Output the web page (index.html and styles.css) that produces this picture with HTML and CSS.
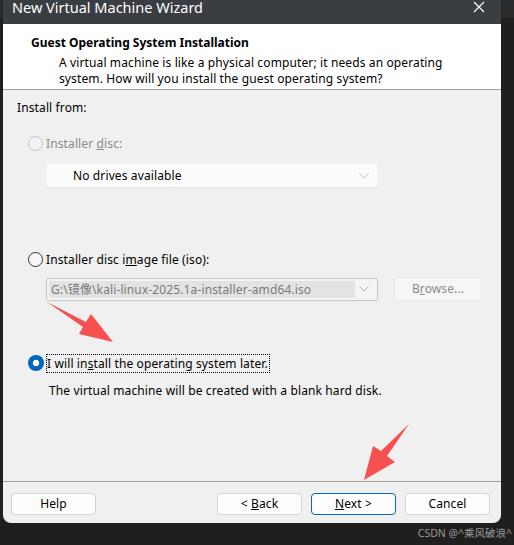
FILE: index.html
```html
<!DOCTYPE html>
<html>
<head>
<meta charset="utf-8">
<link rel="stylesheet" href="styles.css">
</head>
<body>
<div class="screen">
  <div class="dialog">
    <div class="titlebar">
      <span class="title">New Virtual Machine Wizard</span>
      <svg class="close" width="12" height="12" viewBox="0 0 12 12"><path d="M1 1L11 11M11 1L1 11" stroke="#fff" stroke-width="1.2"/></svg>
    </div>
    <div class="header">
      <div class="h-title">Guest Operating System Installation</div>
      <div class="h-desc">A virtual machine is like a physical computer; it needs an operating system. How will you install the guest operating system?</div>
    </div>
    <div class="content">
      <div class="row label">Install from:</div>
      <div class="row radio-row disabled r1">
        <span class="radio"></span>
        <span>Installer <u>d</u>isc:</span>
      </div>
      <div class="combo flat">
        <span class="combo-text">No drives available</span>
        <svg class="chev" width="10" height="6" viewBox="0 0 10 6"><path d="M0.5 0.5L5 5L9.5 0.5" fill="none" stroke="#c4c4c4"/></svg>
      </div>
      <div class="row radio-row r2">
        <span class="radio"></span>
        <span>Installer disc i<u>m</u>age file (iso):</span>
      </div>
      <div class="iso-row">
        <div class="combo boxed">
          <span class="combo-sel">G:\镜像\kali-linux-2025.1a-installer-amd64.iso</span>
          <svg class="chev" width="10" height="6" viewBox="0 0 10 6"><path d="M0.5 0.5L5 5L9.5 0.5" fill="none" stroke="#b0b0b0"/></svg>
        </div>
        <div class="btn browse"><span>B<u>r</u>owse...</span></div>
      </div>
      <div class="row radio-row r3">
        <span class="radio checked"></span>
        <span class="focus">I will in<u>s</u>tall the operating system later.</span>
      </div>
      <div class="row note">The virtual machine will be created with a blank hard disk.</div>
    </div>
    <div class="footer">
      <div class="btn"><span>Help</span></div>
      <div class="btn push"><span>&lt; <u>B</u>ack</span></div>
      <div class="btn primary"><span><u>N</u>ext &gt;</span></div>
      <div class="btn last"><span>Cancel</span></div>
    </div>
  </div>
  <div class="watermark">CSDN @^乘风破浪^</div>
  <svg class="arrow" width="514" height="545" viewBox="0 0 514 545">
    <polygon points="47,302 86,322 91,314 113,342 79,334 83,327" fill="#f85050"/>
    <polygon points="409,424 387,456 395,462 364,480 373,446 381,451" fill="#f85050"/>
  </svg>
</div>
</body>
</html>
```

FILE: styles.css
```css
* { box-sizing: border-box; }
html, body { margin: 0; padding: 0; }
body {
  background: #1e1e1e;
  font-family: "Noto Sans", "Noto Sans CJK SC", sans-serif;
  font-size: 12px;
  letter-spacing: 0.12px;
  color: #000;
}
.screen {
  position: relative;
  width: 514px;
  height: 545px;
  overflow: hidden;
  background: linear-gradient(#2b2b2b 0 18px, #1f1f1f 18px);
}
.dialog {
  margin-left: 3px;
  width: 498px;
  background: #f0f0f0;
  border-radius: 0 0 8px 8px;
  overflow: hidden;
}
.titlebar {
  height: 24px;
  background: #3a3d41;
  display: flex;
  align-items: flex-start;
  justify-content: space-between;
  padding: 0 16px 0 9px;
}
.title {
  color: #fff;
  font-size: 14.5px;
  letter-spacing: 0;
  line-height: 14px;
  padding-top: 0;
}
.close { margin-top: 1px; }
.header {
  height: 66px;
  background: #fff;
  border-bottom: 1px solid #a0a0a0;
  padding: 11px 0 0 28px;
}
.h-title {
  font-weight: bold;
  font-size: 12px;
  letter-spacing: 0;
  line-height: 16px;
}
.h-desc {
  padding: 4px 40px 0 28px;
  line-height: 16px;
}
.content {
  height: 391px;
  padding: 8px 0 0 14px;
  display: flex;
  flex-direction: column;
  align-items: flex-start;
}
.row {
  height: 18px;
  display: flex;
  align-items: center;
  flex: none;
}
.radio-row {
  gap: 3px;
  margin-left: 11px;
}
.r1 { margin-top: 18px; }
.r2 { margin-top: 62px; }
.r3 { margin-top: 53px; }
.radio {
  width: 15px;
  height: 15px;
  border-radius: 50%;
  border: 1px solid #333;
  background: #f6f6f6;
  flex: none;
}
.disabled { color: #8a8a8a; }
.disabled .radio { border-color: #c6c6c6; background: #f3f3f3; }
.radio.checked {
  width: 16px;
  height: 16px;
  border: none;
  background: radial-gradient(circle, #fff 0 3px, #0067c0 3.6px);
}
.combo {
  position: relative;
  display: flex;
  align-items: center;
  width: 332px;
  margin-left: 29px;
  flex: none;
}
.combo.flat {
  height: 25px;
  margin-top: 11px;
  background: #fbfbfb;
  border: 1px solid #f2f2f2;
  border-bottom-color: #e6e6e6;
}
.combo-text { padding-left: 26px; }
.chev { position: absolute; right: 8px; top: 50%; margin-top: -3px; }
.iso-row {
  display: flex;
  align-items: center;
  gap: 16px;
  margin-top: 9px;
  height: 24px;
  flex: none;
}
.combo.boxed {
  height: 23px;
  background: #f4f4f4;
  border: 1px solid #c7c7c7;
  border-radius: 2px;
  padding: 2px;
}
.combo-sel {
  background: #e3e3e3;
  color: #7a7a7a;
  width: 306px;
  height: 17px;
  line-height: 17px;
  padding-left: 2px;
  white-space: nowrap;
  overflow: hidden;
}
.btn {
  width: 85px;
  height: 22px;
  border: 1px solid #d3d3d3;
  border-radius: 4px;
  background: #fdfdfd;
  display: flex;
  align-items: center;
  justify-content: center;
  line-height: 16px;
  flex: none;
}
.browse {
  width: 88px;
  height: 24px;
  color: #8a8a8a;
  background: #f6f6f6;
  border-color: #e8e8e8;
}
.focus {
  outline: 1px dotted #000;
  outline-offset: 0;
  padding-right: 1px;
}
.note {
  margin: 9px 0 0 32px;
}
.footer {
  height: 42px;
  border-top: 1px solid #a0a0a0;
  display: flex;
  align-items: flex-start;
  padding: 11px 11px 0 8px;
  gap: 9px;
}
.push { margin-left: auto; }
.primary { border-color: #0067c0; }
.watermark {
  position: absolute;
  right: 2px;
  top: 526px;
  color: #9a9a9a;
  font-size: 10.5px;
  letter-spacing: 0;
  line-height: 14px;
}
.arrow { position: absolute; left: 0; top: 0; pointer-events: none; }
```
